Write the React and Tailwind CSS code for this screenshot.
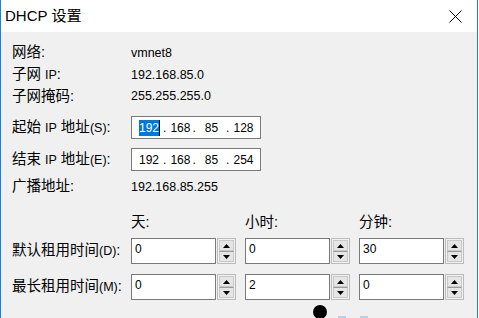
import React from 'react';

const font = "font-['Liberation_Sans','Noto_Sans_CJK_SC',sans-serif]";

function Lat({ children }) {
  return <span className="text-[12.5px]">{children}</span>;
}

function Spin() {
  return (
    <div className="flex h-[26px] w-[19px] flex-col border border-[#bcbcbc] bg-[#f0f0f0] p-[1px]">
      <div className="flex flex-1 items-center justify-center border border-[#c9c9c9] bg-[#e5e5e5]">
        <svg width="7" height="4" viewBox="0 0 7 4">
          <polygon points="3.5,0 7,4 0,4" fill="#000" />
        </svg>
      </div>
      <div className="flex flex-1 items-center justify-center border border-[#c9c9c9] border-t-[#9a9a9a] bg-[#e5e5e5]">
        <svg width="7" height="4" viewBox="0 0 7 4">
          <polygon points="0,0 7,0 3.5,4" fill="#000" />
        </svg>
      </div>
    </div>
  );
}

function NumField({ value }) {
  return (
    <div className="flex w-[105px] gap-[1px]">
      <div className="h-[26px] w-[85px] border border-[#7a7a7a] bg-white pl-[3px] pt-[2px] text-[12px] leading-[16px] text-black">
        {value}
      </div>
      <Spin />
    </div>
  );
}

// octets and dots placed like the Windows IP control
function IpBox({ parts, selected }) {
  const [a, b, c, d] = parts;
  return (
    <div className="flex h-[23px] items-center w-[130px] border border-[#7a7a7a] bg-white pl-[7px] text-[12px] leading-[16px] text-black">
      {selected ? (
        <span className="border-r border-black bg-[#0078d7] text-white">{a}</span>
      ) : (
        <span className="pr-[1px]">{a}</span>
      )}
      <span className="ml-[3px]">.</span>
      <span className="ml-[4px]">{b}</span>
      <span className="ml-[2px]">.</span>
      <span className="ml-[9px]">{c}</span>
      <span className="ml-[8px]">.</span>
      <span className="ml-[4px]">{d}</span>
    </div>
  );
}

export default function App() {
  const label = 'w-[119px] shrink-0 text-[14.5px]';
  return (
    <div className={`h-[318px] w-[479px] overflow-hidden bg-white ${font} text-black`}>
      <div className="flex h-full w-[478px] flex-col border-x border-[#1c7fd6]">
        <div className="flex h-[32px] shrink-0 items-center justify-between bg-white pl-[4px] pr-[15px]">
          <span className="text-[15px]">DHCP 设置</span>
          <svg width="13" height="13" viewBox="0 0 13 13">
            <path d="M0.5 0.5 L12.5 12.5 M12.5 0.5 L0.5 12.5" stroke="#000" strokeWidth="1" />
          </svg>
        </div>
        <div className="flex flex-1 flex-col bg-[#f0f0f0] pl-[11px] pt-[10px]">
          <div className="flex h-[22px] items-center">
            <span className={label}>网络:</span>
            <span className="text-[12.5px]">vmnet8</span>
          </div>
          <div className="flex h-[22px] items-center">
            <span className={label}>子网 <Lat>IP</Lat>:</span>
            <span className="text-[12.5px]">192.168.85.0</span>
          </div>
          <div className="flex h-[21px] items-center">
            <span className={label}>子网掩码:</span>
            <span className="text-[12.5px]">255.255.255.0</span>
          </div>
          <div className="mt-[9px] flex h-[23px] items-center">
            <span className={label}>起始 <Lat>IP</Lat> 地址<Lat>(S)</Lat>:</span>
            <IpBox parts={['192', '168', '85', '128']} selected />
          </div>
          <div className="mt-[9px] flex h-[23px] items-center">
            <span className={label}>结束 <Lat>IP</Lat> 地址<Lat>(E)</Lat>:</span>
            <IpBox parts={['192', '168', '85', '254']} />
          </div>
          <div className="mt-[6px] flex h-[20px] items-center">
            <span className={label}>广播地址:</span>
            <span className="text-[12.5px]">192.168.85.255</span>
          </div>
          <div className="mt-[16px] flex h-[20px] items-center text-[14.5px]">
            <span className="w-[119px] shrink-0" />
            <div className="flex gap-[9px]">
              <span className="w-[105px]">天:</span>
              <span className="w-[105px]">小时:</span>
              <span className="w-[105px]">分钟:</span>
            </div>
          </div>
          <div className="mt-[5px] flex h-[26px] items-center">
            <span className={label}>默认租用时间<Lat>(D)</Lat>:</span>
            <div className="flex gap-[9px]">
              <NumField value="0" />
              <NumField value="0" />
              <NumField value="30" />
            </div>
          </div>
          <div className="mt-[10px] flex h-[26px] items-center">
            <span className={label}>最长租用时间<Lat>(M)</Lat>:</span>
            <div className="flex gap-[9px]">
              <NumField value="0" />
              <NumField value="2" />
              <NumField value="0" />
            </div>
          </div>
          <div className="ml-[301px] mt-[5px] flex items-start">
            <div className="h-[14px] w-[14px] shrink-0 rounded-full bg-black" />
            <div className="ml-[11px] mt-[11px] h-[3px] w-[8px] bg-[#a6d8f5]" />
            <div className="ml-[14px] mt-[11px] h-[3px] w-[8px] bg-[#a6d8f5]" />
          </div>
        </div>
      </div>
    </div>
  );
}
